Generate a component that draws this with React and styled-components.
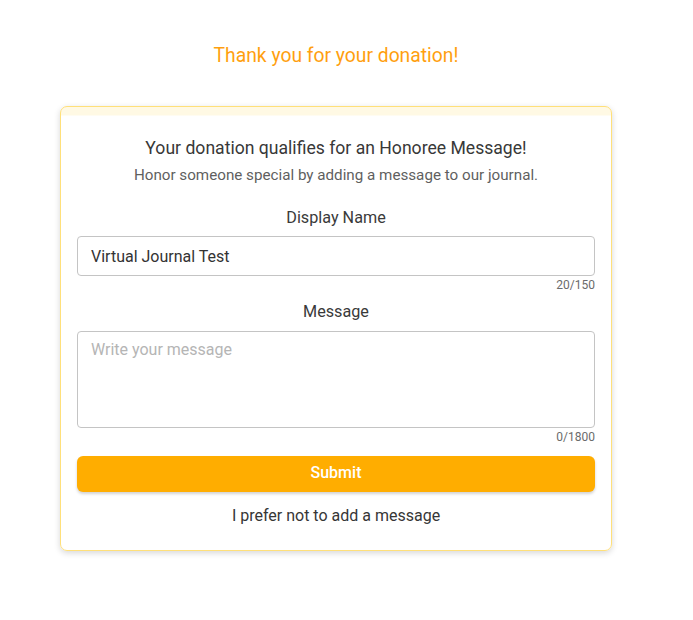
import React from "react";
import styled, { createGlobalStyle } from "styled-components";

const Global = createGlobalStyle`
  body { margin: 0; background: #fff; font-family: Roboto, "Noto Sans", Arial, sans-serif; }
  * { box-sizing: border-box; }
`;

const Page = styled.div`
  width: 672px;
  padding: 43px 0 60px;
  display: flex;
  flex-direction: column;
  align-items: center;
`;

const Title = styled.h1`
  margin: 0;
  font-size: 19.3px;
  font-weight: 400;
  color: #ff9f0f;
  line-height: 26px;
`;

const Card = styled.div`
  margin-top: 37px;
  width: 552px;
  border: 1px solid #ffe07a;
  border-radius: 7px;
  background: linear-gradient(#fff9e4 0, #fff9e4 8px, #fff 9px);
  box-shadow: 0 2px 6px rgba(0, 0, 0, 0.16);
  padding: 29px 16px 24px;
  display: flex;
  flex-direction: column;
  align-items: stretch;
`;

const Heading = styled.h2`
  margin: 0;
  text-align: center;
  font-size: 17.6px;
  font-weight: 400;
  color: #383838;
  line-height: 24px;
`;

const Sub = styled.p`
  margin: 5px 0 0;
  text-align: center;
  font-size: 15.2px;
  color: #5f5f5f;
  line-height: 20px;
`;

const Label = styled.label`
  display: block;
  text-align: center;
  font-size: 16.2px;
  color: #3a3a3a;
  line-height: 20px;
  margin-top: ${(p) => p.$mt}px;
  margin-bottom: ${(p) => p.$mb}px;
`;

const Input = styled.input`
  width: 100%;
  height: 40px;
  border: 1px solid #c4c4c4;
  border-radius: 4px;
  padding: 0 13px;
  font-family: inherit;
  font-size: 16px;
  color: #333;
  outline: none;
`;

const Area = styled.textarea`
  width: 100%;
  height: 97px;
  border: 1px solid #c4c4c4;
  border-radius: 4px;
  padding: 8px 13px;
  font-family: inherit;
  font-size: 16px;
  color: #333;
  resize: none;
  outline: none;
  display: block;
  &::placeholder { color: #b5b5b5; }
`;

const Counter = styled.div`
  text-align: right;
  font-size: 12px;
  color: #6b6b6b;
  line-height: 14px;
  margin-top: 2px;
`;

const Submit = styled.button`
  margin-top: 12px;
  height: 36px;
  padding: 0 0 3px;
  border: none;
  border-radius: 6px;
  background: #ffad00;
  color: #fff;
  font-family: inherit;
  font-size: 16px;
  font-weight: 500;
  box-shadow: 0 2px 3px rgba(0, 0, 0, 0.18);
  cursor: pointer;
`;

const Skip = styled.button`
  margin-top: 14px;
  padding: 0;
  background: none;
  border: none;
  font-family: inherit;
  font-size: 16px;
  color: #363636;
  line-height: 20px;
  cursor: pointer;
  align-self: center;
`;

export default function App() {
  return (
    <>
      <Global />
      <Page>
        <Title>Thank you for your donation!</Title>
        <Card>
          <Heading>Your donation qualifies for an Honoree Message!</Heading>
          <Sub>Honor someone special by adding a message to our journal.</Sub>
          <Label $mt={23} $mb={8}>Display Name</Label>
          <Input defaultValue="Virtual Journal Test" />
          <Counter>20/150</Counter>
          <Label $mt={10} $mb={9}>Message</Label>
          <Area placeholder="Write your message" />
          <Counter>0/1800</Counter>
          <Submit>Submit</Submit>
          <Skip>I prefer not to add a message</Skip>
        </Card>
      </Page>
    </>
  );
}
